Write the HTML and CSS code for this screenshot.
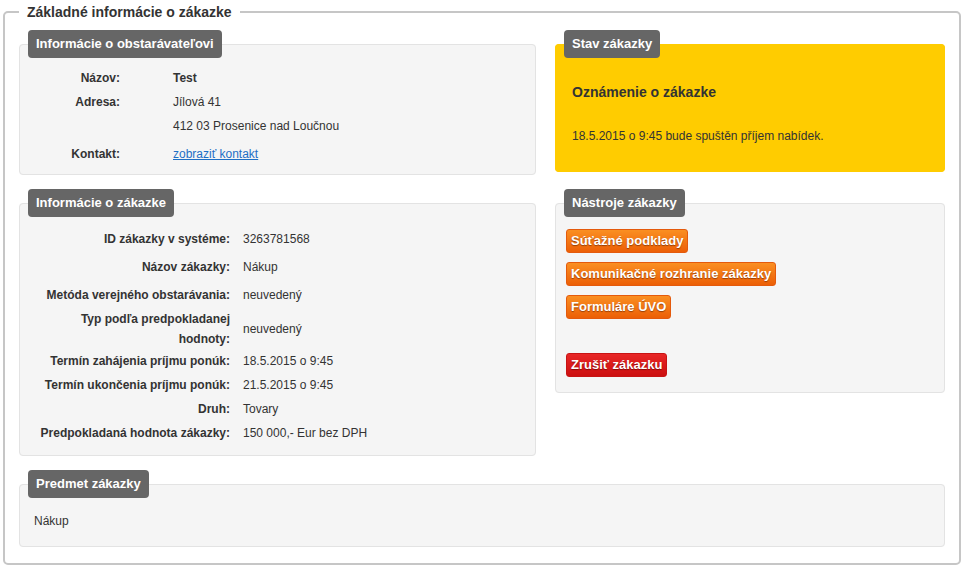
FILE: index.html
```html
<!DOCTYPE html>
<html lang="sk">
<head>
	<meta charset="UTF-8">
	<title>Základné informácie o zákazke</title>
	<link rel="stylesheet" href="styles.css">
</head>
<body>
	<fieldset class="main">
		<legend class="main-title">Základné informácie o zákazke</legend>
		<div class="grid">
			<fieldset class="panel">
				<legend class="tab">Informácie o obstarávateľovi</legend>
				<table class="info buyer">
					<tr><th>Názov:</th><td><b>Test</b></td></tr>
					<tr><th>Adresa:</th><td>Jílová 41</td></tr>
					<tr><th></th><td>412 03 Prosenice nad Loučnou</td></tr>
					<tr class="contact"><th>Kontakt:</th><td><a href="#kontakt">zobraziť kontakt</a></td></tr>
				</table>
			</fieldset>

			<fieldset class="panel state">
				<legend class="tab">Stav zákazky</legend>
				<div class="state-body">
					<h3>Oznámenie o zákazke</h3>
					<p>18.5.2015 o 9:45 bude spuštěn příjem nabídek.</p>
				</div>
			</fieldset>

			<fieldset class="panel">
				<legend class="tab">Informácie o zákazke</legend>
				<table class="info order">
					<tr class="tall"><th>ID zákazky v systéme:</th><td>3263781568</td></tr>
					<tr class="tall"><th>Názov zákazky:</th><td>Nákup</td></tr>
					<tr class="tall"><th>Metóda verejného obstarávania:</th><td>neuvedený</td></tr>
					<tr class="wrap"><th>Typ podľa predpokladanej hodnoty:</th><td>neuvedený</td></tr>
					<tr><th>Termín zahájenia príjmu ponúk:</th><td>18.5.2015 o 9:45</td></tr>
					<tr><th>Termín ukončenia príjmu ponúk:</th><td>21.5.2015 o 9:45</td></tr>
					<tr><th>Druh:</th><td>Tovary</td></tr>
					<tr><th>Predpokladaná hodnota zákazky:</th><td>150 000,- Eur bez DPH</td></tr>
				</table>
			</fieldset>

			<fieldset class="panel">
				<legend class="tab">Nástroje zákazky</legend>
				<div class="tools">
					<a class="btn" href="#podklady">Súťažné podklady</a>
					<a class="btn" href="#komunikacia">Komunikačné rozhranie zákazky</a>
					<a class="btn" href="#formulare">Formuláre ÚVO</a>
					<a class="btn cancel" href="#zrusit">Zrušiť zákazku</a>
				</div>
			</fieldset>

			<fieldset class="panel subject">
				<legend class="tab">Predmet zákazky</legend>
				<p>Nákup</p>
			</fieldset>
		</div>
	</fieldset>
</body>
</html>
```

FILE: styles.css
```css
* {
	margin: 0;
	padding: 0;
	box-sizing: border-box;
}
body {
	padding: 0 3px;
	font-family: "Liberation Sans", Arial, sans-serif;
	font-size: 12px;
	color: #333;
	background: #fff;
}
fieldset {
	min-width: 0;
}
.main {
	margin-top: 3px;
	border: 2px solid #c6c6c6;
	border-radius: 5px;
	padding: 9px 14px 16px;
}
.main-title {
	padding: 0 8px;
	font-size: 14px;
	line-height: 18px;
	font-weight: bold;
	color: #333;
}
.grid {
	display: grid;
	grid-template-columns: 517px 1fr;
	column-gap: 19px;
	row-gap: 14px;
	align-items: start;
}
.panel {
	border: 1px solid #e3e3e3;
	border-radius: 4px;
	background: #f5f5f5;
	padding: 0;
}
.tab {
	margin-left: 8px;
	padding: 0 8px;
	background: #666;
	color: #fff;
	font-size: 13px;
	font-weight: bold;
	line-height: 28px;
	border-radius: 4px;
}

/* tables */
.info {
	border-collapse: collapse;
}
.info th {
	text-align: right;
	font-weight: bold;
	vertical-align: middle;
	white-space: nowrap;
}
.info td {
	vertical-align: middle;
}
.buyer {
	margin: 8px 0 8px;
}
.buyer th {
	width: 100px;
	line-height: 24px;
}
.buyer td {
	padding-left: 53px;
	line-height: 24px;
}
.buyer .contact th,
.buyer .contact td {
	padding-top: 4px;
}
.buyer a {
	color: #1f6fc5;
}
.order {
	margin: 8px 0 10px 16px;
}
.order th {
	width: 207px;
	padding: 2px 13px 2px 0;
	line-height: 20px;
}
.order td {
	padding: 2px 0;
	line-height: 20px;
}
.order .tall th,
.order .tall td {
	padding-top: 4px;
	padding-bottom: 4px;
}
.order .wrap th {
	white-space: normal;
}
.order .wrap th,
.order .wrap td {
	padding-top: 0;
	padding-bottom: 0;
}

/* stav */
.state {
	background: #ffcc00;
	border-color: #ffcc00;
}
.state-body {
	padding: 0 16px 27px;
}
.state h3 {
	padding-top: 26px;
	font-size: 14px;
	line-height: 16px;
}
.state p {
	margin-top: 28px;
	line-height: 16px;
}

/* nastroje */
.tools {
	display: flex;
	flex-direction: column;
	align-items: flex-start;
	gap: 9px;
	padding: 12px 10px 15px;
}
.btn {
	display: inline-block;
	padding: 0 4px;
	line-height: 22px;
	font-size: 13px;
	font-weight: bold;
	color: #fff;
	text-decoration: none;
	text-shadow: 0 1px 1px rgba(90, 30, 0, .6);
	border: 1px solid #e45a0c;
	border-radius: 3px;
	background: linear-gradient(#fa8f22, #ec5f06);
}
.btn.cancel {
	margin-top: 25px;
	border-color: #c71414;
	text-shadow: 0 1px 1px rgba(80, 0, 0, .6);
	background: linear-gradient(#e82626, #cc1010);
}

/* predmet */
.subject {
	grid-column: 1 / 3;
}
.subject p {
	padding: 15px 14px 17px;
	line-height: 16px;
}
```
